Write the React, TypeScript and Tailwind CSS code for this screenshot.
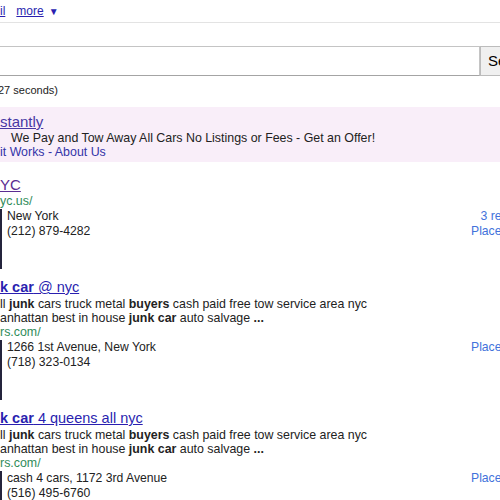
const linkBlue = "text-[#2a1fb0]";

function Snippet() {
  return (
    <>
      <div className="leading-[14px] whitespace-nowrap">
        ll <b>junk</b> cars truck metal <b>buyers</b> cash paid free tow service area nyc
      </div>
      <div className="leading-[14px] whitespace-nowrap">
        anhattan best in house <b>junk car</b> auto salvage <b>...</b>
      </div>
    </>
  );
}

function LocalRow({ lines, right }: { lines: string[]; right: string[] }) {
  return (
    <div className="mt-[1px] flex h-[60px] w-[532px] text-[12.2px]">
      <div className="w-[2px] bg-[#24243c]" />
      <div className="ml-[5px] flex-1 leading-[15px] text-[#222]">
        {lines.map((line) => (
          <div key={line} className="whitespace-nowrap">{line}</div>
        ))}
      </div>
      <div className="text-right leading-[15px] text-[#4272db]">
        {right.map((line) => (
          <div key={line} className="whitespace-nowrap">{line}</div>
        ))}
      </div>
    </div>
  );
}

export default function App() {
  return (
    <div className="h-[500px] w-[500px] overflow-hidden bg-white font-['Liberation_Sans',Arial,sans-serif] text-[12.4px] text-[#222]">
      <div className={`flex h-[23px] border-b border-[#e3e3e3] pt-[4px] text-[12px] leading-[15px] ${linkBlue}`}>
        <a className="underline">il</a>
        <a className="ml-[11px] underline">more</a>
        <span className="ml-[5px] text-[10px]">▼</span>
      </div>

      <div className="mt-[23px] flex h-[30px] w-[560px]">
        <div className="-ml-[10px] h-full w-[490px] border border-[#c4c4c4] border-b-[#a4a4a4] bg-white" />
        <div className="h-full w-[80px] border border-[#bcbcbc] bg-[#f0f0f0] pl-[7px] text-[15px] leading-[28px] text-black">
          Search
        </div>
      </div>

      <div className="mt-[7px] -ml-[2px] text-[11px] leading-[14px] text-[#222]">27 seconds)</div>

      <div className="mt-[10px] bg-[#f9eef9] pt-[5px] pb-[3px]">
        <a className="block text-[15px] leading-[19px] text-[#4838a4] underline">stantly</a>
        <div className="pl-[11px] leading-[14px] whitespace-nowrap">
          We Pay and Tow Away All Cars No Listings or Fees - Get an Offer!
        </div>
        <div className="leading-[14px] text-[#3434a8]">it Works - About Us</div>
      </div>

      <div className="mt-[13px] mb-[9px]">
        <a className="block text-[15px] leading-[19px] text-[#5a2d91] underline">YC</a>
        <div className="leading-[14px] text-[#2f8c5a]">yc.us/</div>
        <LocalRow lines={["New York", "(212) 879-4282"]} right={["3 reviews", "Place page"]} />
      </div>

      <div className="mb-[9px]">
        <a className={`block text-[14.5px] leading-[19px] underline ${linkBlue}`}>
          <b>k car</b> @ nyc
        </a>
        <Snippet />
        <div className="leading-[14px] text-[#2f8c5a]">rs.com/</div>
        <LocalRow lines={["1266 1st Avenue, New York", "(718) 323-0134"]} right={["Place page"]} />
      </div>

      <div>
        <a className={`block text-[14.5px] leading-[19px] underline ${linkBlue}`}>
          <b>k car</b> 4 queens all nyc
        </a>
        <Snippet />
        <div className="leading-[14px] text-[#2f8c5a]">rs.com/</div>
        <LocalRow lines={["cash 4 cars, 1172 3rd Avenue", "(516) 495-6760"]} right={["Place page"]} />
      </div>
    </div>
  );
}
